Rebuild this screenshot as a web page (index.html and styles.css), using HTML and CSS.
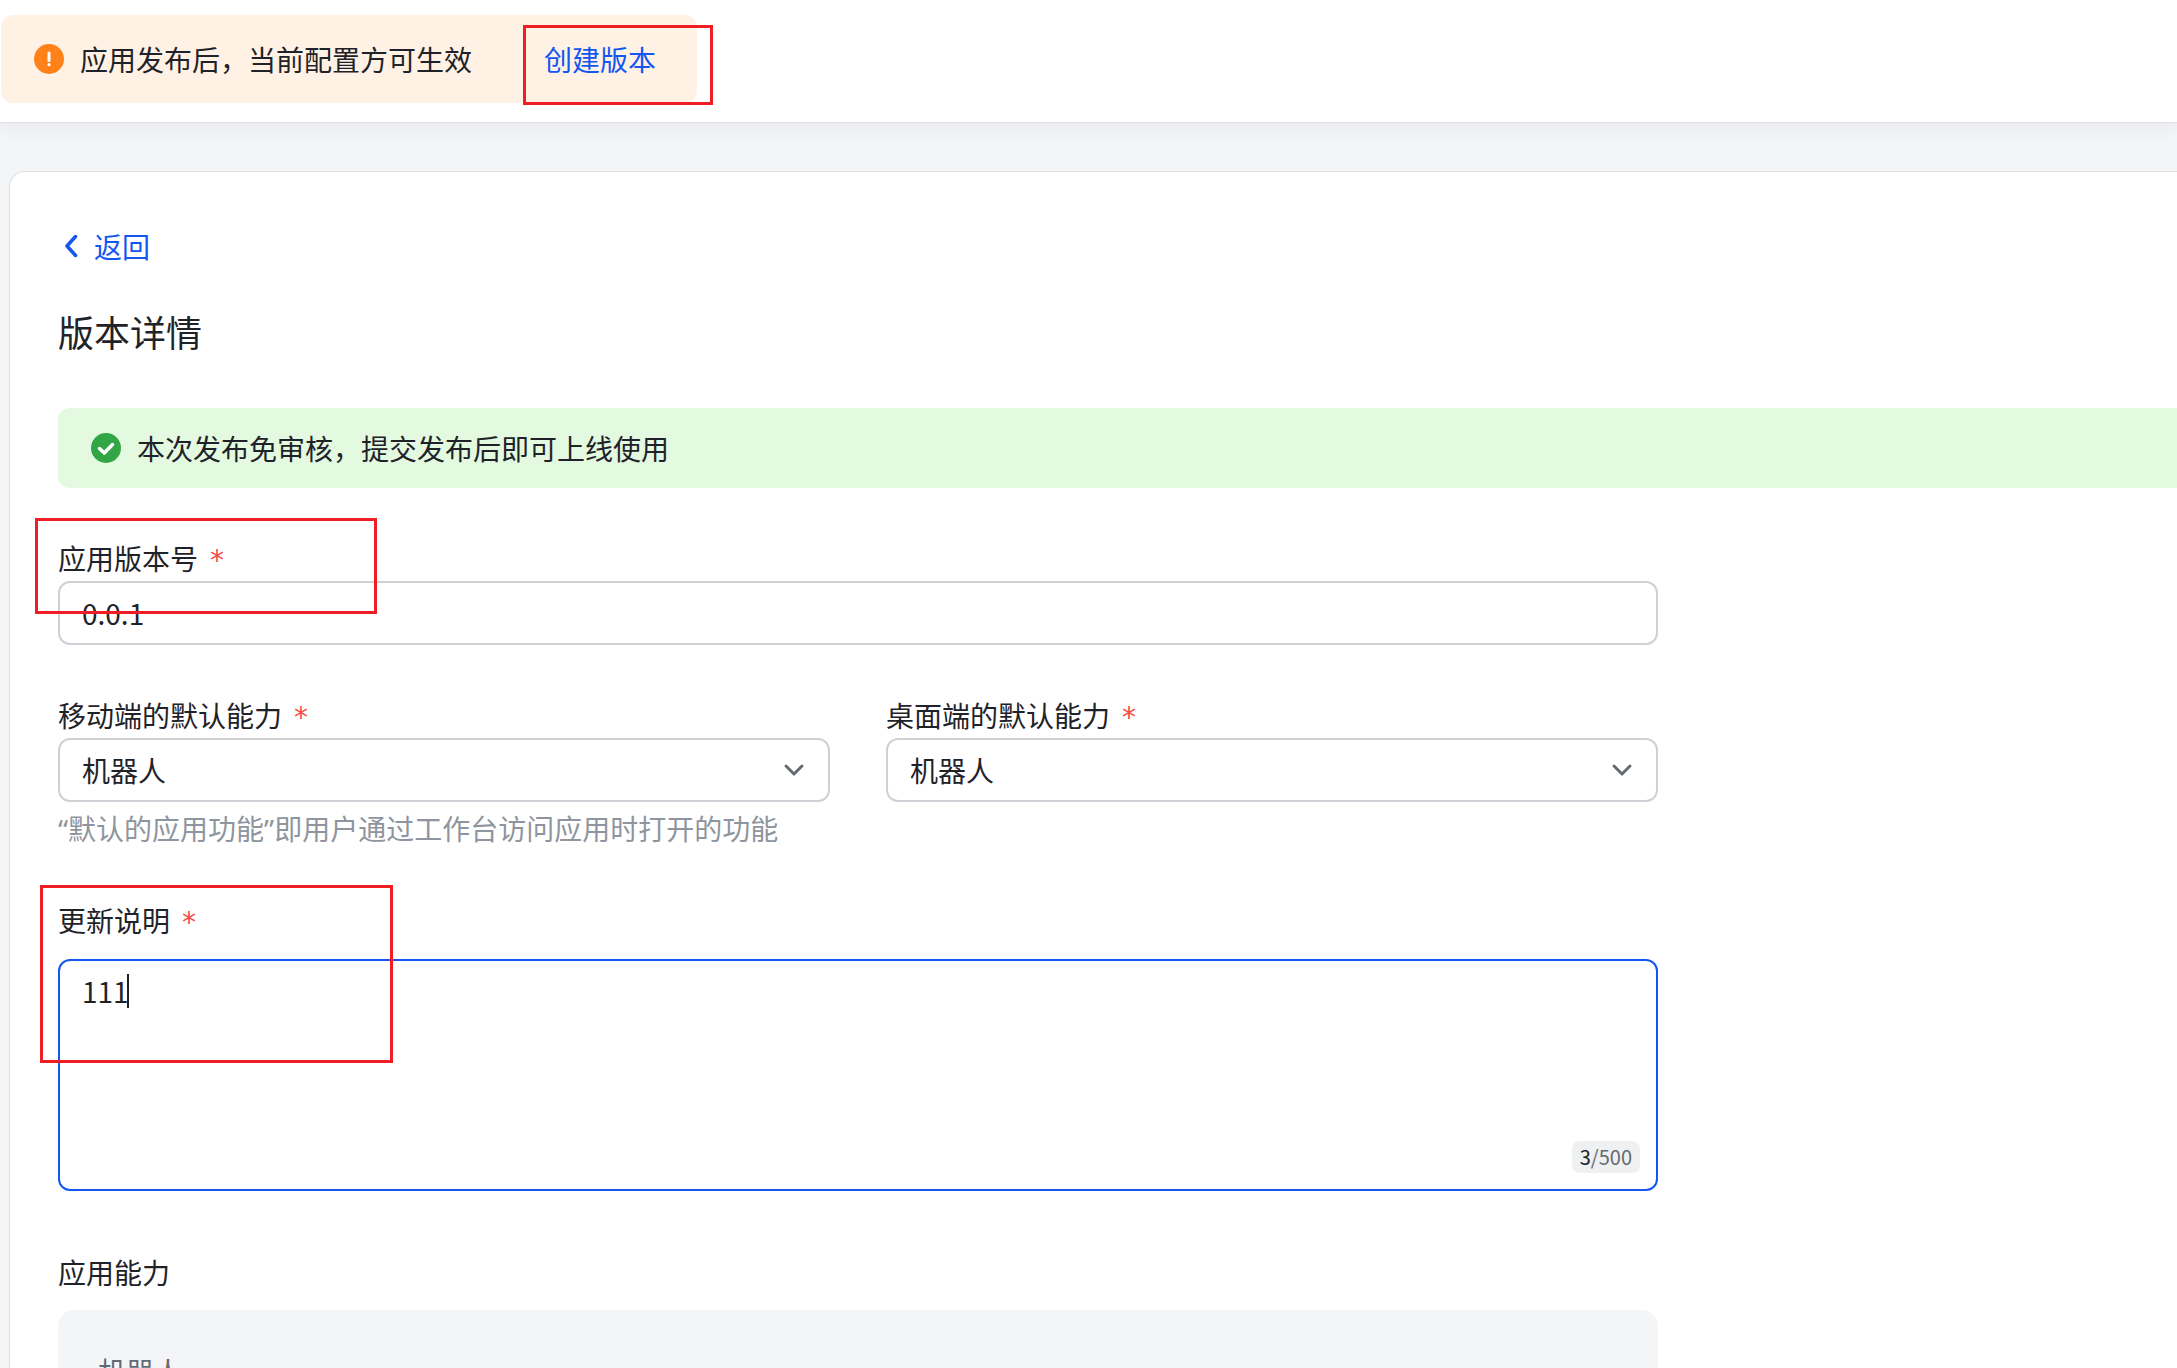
FILE: index.html
```html
<!DOCTYPE html>
<html lang="zh-CN">
<head>
    <meta charset="UTF-8">
    <meta name="viewport" content="width=device-width, initial-scale=1.0">
    <title>版本详情</title>
    <link rel="stylesheet" href="styles.css">
</head>
<body>
    <header class="topbar">
        <div class="notice notice-warning">
            <svg class="notice-icon" viewBox="0 0 30 30" aria-hidden="true">
                <circle cx="15" cy="15" r="15" fill="#ff811a" />
                <path d="M15 9v7.5" stroke="#fff" stroke-width="3" stroke-linecap="round" />
                <circle cx="15" cy="20.7" r="1.6" fill="#fff" />
            </svg>
            <span>应用发布后，当前配置方可生效</span>
            <a class="link create-link" href="#version">创建版本</a>
            <div class="mark mark-create"></div>
        </div>
    </header>

    <main class="card">
        <a class="link back" href="#">
            <svg class="back-icon" viewBox="0 0 28 28" aria-hidden="true">
                <path d="M17.5 4.5L9 14l8.500 9.500" fill="none" stroke="#1456f0" stroke-width="3.500" stroke-linecap="round" stroke-linejoin="round" />
            </svg>
            <span>返回</span>
        </a>
        <h1 class="title">版本详情</h1>

        <div class="notice notice-success">
            <svg class="notice-icon" viewBox="0 0 30 30" aria-hidden="true">
                <circle cx="15" cy="15" r="15" fill="#32a645" />
                <path d="M8.500 15.500l4.800 4.500L21.500 11.500" fill="none" stroke="#fff" stroke-width="3.500" stroke-linecap="round" stroke-linejoin="round" />
            </svg>
            <span>本次发布免审核，提交发布后即可上线使用</span>
        </div>

        <form class="form">
            <div class="field">
                <label class="label" for="version">应用版本号<span class="required">*</span></label>
                <input class="control" type="text" id="version" name="version" value="0.0.1" required>
                <div class="mark mark-version"></div>
            </div>

            <div class="row">
                <div class="field">
                    <label class="label" for="mobile">移动端的默认能力<span class="required">*</span></label>
                    <div class="select-wrap">
                        <select class="control" id="mobile" name="mobile">
                            <option>机器人</option>
                        </select>
                        <svg class="arrow" viewBox="0 0 24 24" aria-hidden="true">
                            <path d="M4 8l8 8 8-8" fill="none" stroke="#646a73" stroke-width="3" stroke-linecap="round" stroke-linejoin="round" />
                        </svg>
                    </div>
                </div>
                <div class="field">
                    <label class="label" for="desktop">桌面端的默认能力<span class="required">*</span></label>
                    <div class="select-wrap">
                        <select class="control" id="desktop" name="desktop">
                            <option>机器人</option>
                        </select>
                        <svg class="arrow" viewBox="0 0 24 24" aria-hidden="true">
                            <path d="M4 8l8 8 8-8" fill="none" stroke="#646a73" stroke-width="3" stroke-linecap="round" stroke-linejoin="round" />
                        </svg>
                    </div>
                </div>
            </div>
            <p class="hint"><span class="quote">“</span>默认的应用功能<span class="quote">”</span>即用户通过工作台访问应用时打开的功能</p>

            <div class="field field-notes">
                <label class="label" for="notes">更新说明<span class="required">*</span></label>
                <div class="textarea-wrap">
                    <textarea class="control textarea" id="notes" name="notes" maxlength="500" required>111</textarea>
                    <span class="caret"></span>
                    <span class="counter"><span class="count">3</span>/500</span>
                </div>
                <div class="mark mark-notes"></div>
            </div>

            <section class="ability">
                <h2 class="label">应用能力</h2>
                <div class="ability-box">机器人</div>
            </section>
        </form>
    </main>
</body>
</html>
```
FILE: styles.css
```css
* {
    box-sizing: border-box;
}

body {
    display: flex;
    flex-direction: column;
    height: 100vh;
    margin: 0;
    overflow: hidden;
    background-color: #f4f5f7;
    color: #1f2329;
    font-family: "Noto Sans CJK SC", sans-serif;
    font-size: 28px;
    line-height: 42px;
}

.link {
    color: #1456f0;
    text-decoration: none;
}

/* Top bar */
.topbar {
    display: flex;
    flex-shrink: 0;
    padding: 15px 1px 19px;
    background-color: #fff;
    border-bottom: 1px solid #dee0e3;
    box-shadow: 0 4px 20px rgba(31, 35, 41, 0.06);
}

.notice {
    display: flex;
    align-items: center;
    gap: 16px;
    border-radius: 12px;
}

.notice-icon {
    flex-shrink: 0;
    width: 30px;
    height: 30px;
}

.notice-warning {
    position: relative;
    height: 88px;
    padding: 0 41px 0 33px;
    background-color: #fff2e5;
}

.create-link {
    margin-left: 56px;
}

/* Card */
.card {
    flex: 1;
    min-height: 0;
    margin: 48px 0 0 9px;
    padding: 54px 0 0 48px;
    overflow: hidden;
    background-color: #fff;
    border: 1px solid #dee0e3;
    border-width: 1px 0 0 1px;
    border-radius: 16px 0 0 0;
}

.back {
    display: flex;
    align-items: center;
    gap: 8px;
    width: fit-content;
    height: 40px;
}

.back-icon {
    width: 28px;
    height: 28px;
}

.title {
    margin: 37px 0 49px;
    font-size: 36px;
    font-weight: 400;
    line-height: 56px;
}

.notice-success {
    height: 80px;
    padding-left: 33px;
    border-radius: 12px 0 0 12px;
    background-color: #e3f9e0;
}

/* Form */
.form {
    max-width: 1600px;
    margin-top: 50px;
}

.field {
    position: relative;
    flex: 1;
}

.label {
    display: flex;
    margin: 0 0 3px;
    font-size: 28px;
    font-weight: 400;
    line-height: 40px;
}

.required {
    margin-left: 12px;
    padding-top: 6px;
    color: #f54a45;
    font-family: "DejaVu Sans", sans-serif;
    line-height: 34px;
}

.control {
    display: block;
    width: 100%;
    height: 64px;
    padding: 0 22px 1px;
    background-color: #fff;
    border: 2px solid #cdd1d6;
    border-radius: 12px;
    color: inherit;
    font: inherit;
    outline: none;
    appearance: none;
}

.row {
    display: flex;
    gap: 56px;
    margin-top: 50px;
}

.select-wrap,
.textarea-wrap {
    position: relative;
}

.arrow {
    position: absolute;
    top: 20px;
    right: 24px;
    width: 24px;
    height: 24px;
    pointer-events: none;
}

.hint {
    margin: 5px 0 51px;
    color: #8f959e;
}

.quote {
    font-family: "Noto Sans", sans-serif;
    line-height: 1;
}

.field-notes .label {
    margin-bottom: 19px;
}

.textarea {
    height: 232px;
    padding: 9px 22px;
    border-color: #1456f0;
    resize: none;
}

.caret {
    position: absolute;
    top: 15px;
    left: 69px;
    width: 2px;
    height: 34px;
    background-color: #1f2329;
}

.counter {
    position: absolute;
    right: 18px;
    bottom: 18px;
    padding: 0 8px;
    background-color: #eff0f1;
    border-radius: 8px;
    color: #646a73;
    font-size: 20px;
    line-height: 32px;
}

.count {
    color: #1f2329;
}

.ability {
    margin-top: 61px;
}

.ability-box {
    height: 180px;
    margin-top: 18px;
    padding: 40px;
    background-color: #f4f5f7;
    border-radius: 16px;
    color: #646a73;
}

/* Red highlight frames */
.mark {
    position: absolute;
    border: 3px solid #f01d24;
    pointer-events: none;
}

.mark-create {
    top: 10px;
    right: -16px;
    width: 190px;
    height: 80px;
}

.mark-version {
    top: -20px;
    left: -23px;
    width: 342px;
    height: 96px;
}

.mark-notes {
    top: -15px;
    left: -18px;
    width: 353px;
    height: 178px;
}
```
